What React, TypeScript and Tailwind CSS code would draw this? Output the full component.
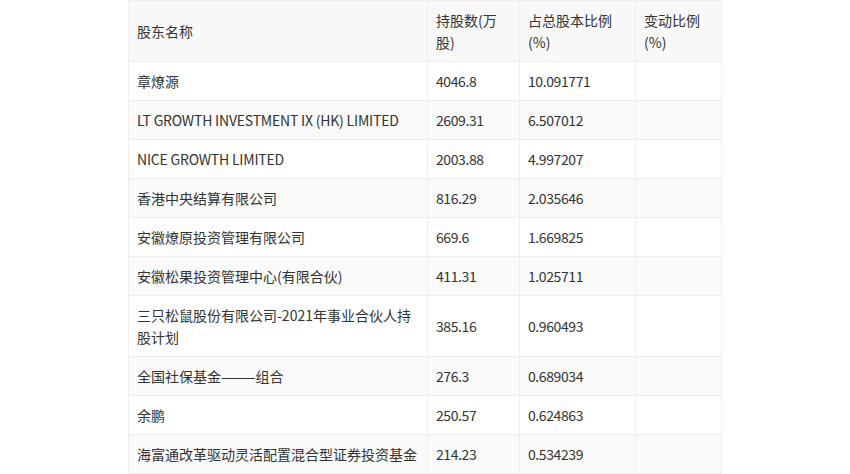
import React from "react";

const rows: [string, string, string, string][] = [
  ["章燎源", "4046.8", "10.091771", ""],
  ["LT GROWTH INVESTMENT IX (HK) LIMITED", "2609.31", "6.507012", ""],
  ["NICE GROWTH LIMITED", "2003.88", "4.997207", ""],
  ["香港中央结算有限公司", "816.29", "2.035646", ""],
  ["安徽燎原投资管理有限公司", "669.6", "1.669825", ""],
  ["安徽松果投资管理中心(有限合伙)", "411.31", "1.025711", ""],
  ["三只松鼠股份有限公司-2021年事业合伙人持股计划", "385.16", "0.960493", ""],
  ["全国社保基金———组合", "276.3", "0.689034", ""],
  ["余鹏", "250.57", "0.624863", ""],
  ["海富通改革驱动灵活配置混合型证券投资基金", "214.23", "0.534239", ""],
];

const isLatin = (s: string) => /^[\x00-\x7f]*$/.test(s);

export default function App() {
  return (
    <div className="w-[850px] h-[474px] bg-white overflow-hidden flex justify-center font-['Noto_Sans_CJK_SC','Noto_Sans',sans-serif]">
      <div>
        <table className="table-fixed border-collapse text-[14px] leading-[22px] text-[#333]">
          <colgroup>
            <col className="w-[299px]" />
            <col className="w-[92px]" />
            <col className="w-[116px]" />
            <col className="w-[86px]" />
          </colgroup>
          <thead>
            <tr className="bg-[#f8f8f8]">
              <th className="border border-[#eeeeee] px-2 py-2 font-normal text-left align-middle">股东名称</th>
              <th className="border border-[#eeeeee] px-2 py-2 font-normal text-left align-middle">持股数(万股)</th>
              <th className="border border-[#eeeeee] px-2 py-2 font-normal text-left align-middle">占总股本比例(%)</th>
              <th className="border border-[#eeeeee] px-2 py-2 font-normal text-left align-middle">变动比例(%)</th>
            </tr>
          </thead>
          <tbody>
            {rows.map((r, i) => (
              <tr key={i} className={i % 2 === 1 ? "bg-[#fafafa]" : "bg-white"}>
                <td
                  className={
                    isLatin(r[0])
                      ? "border border-[#eeeeee] px-2 py-2 align-middle tracking-[-0.2px]"
                      : "border border-[#eeeeee] px-2 py-2 align-middle"
                  }
                >
                  {r[0]}
                </td>
                <td className="border border-[#eeeeee] px-2 py-2 align-middle tracking-[-0.4px]">{r[1]}</td>
                <td className="border border-[#eeeeee] px-2 py-2 align-middle tracking-[-0.4px]">{r[2]}</td>
                <td className="border border-[#eeeeee] px-2 py-2 align-middle">{r[3]}</td>
              </tr>
            ))}
          </tbody>
        </table>
      </div>
    </div>
  );
}
